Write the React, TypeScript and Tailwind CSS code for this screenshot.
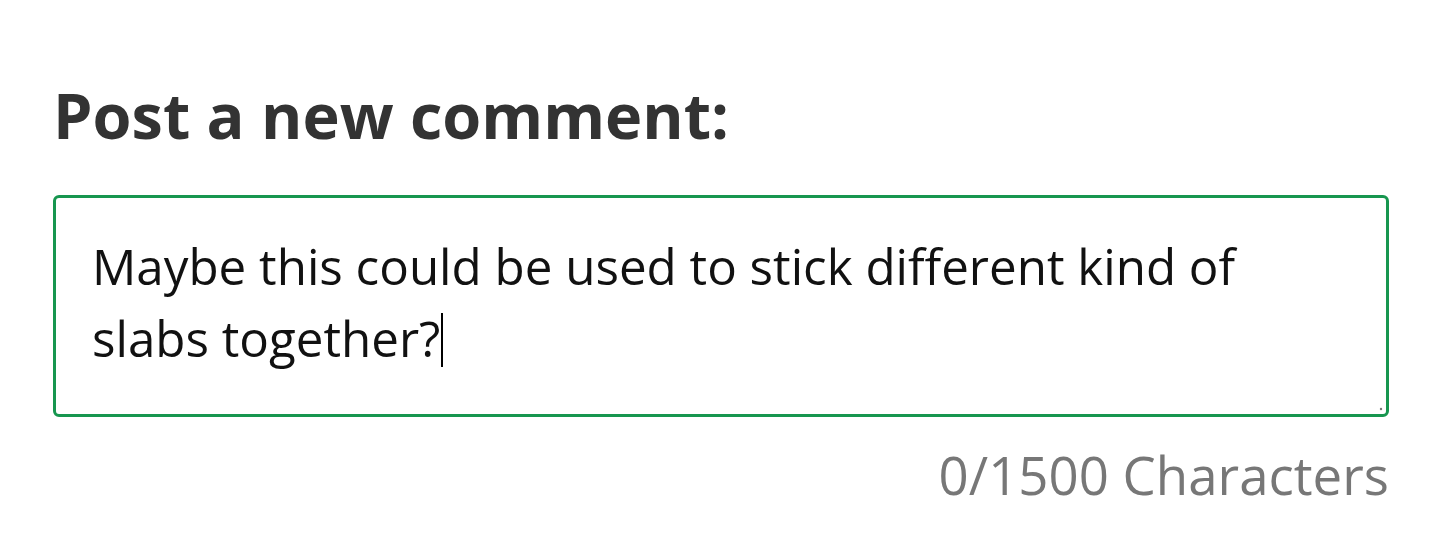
export default function App() {
  return (
    <div
      className="min-h-[560px] bg-white px-[53px] pt-[75px]"
      style={{ fontFamily: '"Open Sans", "Noto Sans", sans-serif' }}
    >
      <h2 className="text-[63px] font-bold leading-[80px] text-[#333333]">
        Post a new comment:
      </h2>
      <div className="relative mt-[40px] h-[222px] w-[1336px] rounded-[6px] border-[3px] border-[#17964f] px-[36px] pt-[32px]">
        <p className="text-[49.3px] leading-[72px] text-[#111111]">
          Maybe this could be used to stick different kind of slabs together?
          <span className="ml-[1px] inline-block h-[54px] w-[2px] translate-y-[10px] bg-black align-baseline" />
        </p>
        <svg
          className="absolute bottom-[2px] right-[2px]"
          width="8"
          height="8"
          viewBox="0 0 8 8"
        >
          <circle cx="5" cy="5" r="1.2" fill="#777" />
        </svg>
      </div>
      <p className="mt-[22px] w-[1336px] text-right text-[52.8px] leading-[72px] text-[#777777]">
        0/1500 Characters
      </p>
    </div>
  );
}
